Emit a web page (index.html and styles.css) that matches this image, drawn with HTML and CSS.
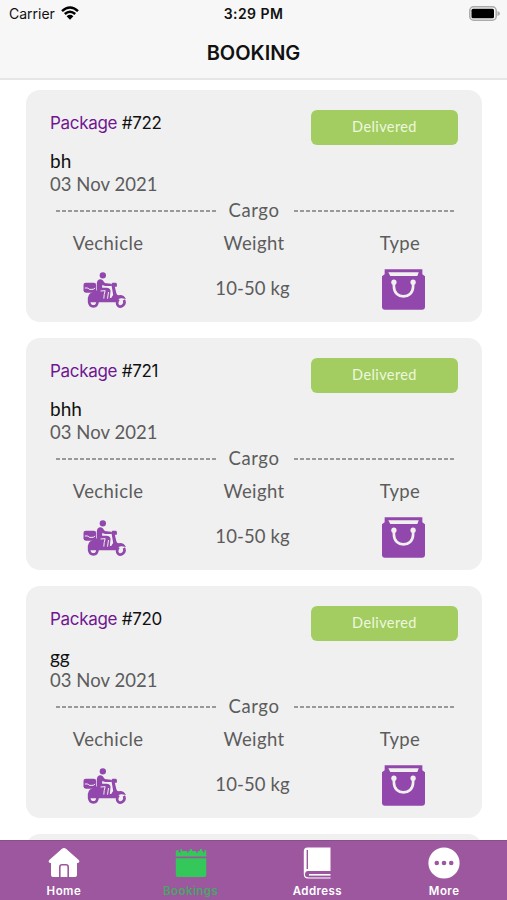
FILE: index.html
```
<!DOCTYPE html>
<html lang="en">
<head>
    <meta charset="UTF-8">
    <meta name="viewport" content="width=device-width, initial-scale=1.0">
    <title>Booking</title>
    <link rel="stylesheet" href="styles.css">
</head>
<body>
    <!-- Shared icons -->
    <svg class="icon-defs" width="0" height="0">
        <symbol id="scooter" viewBox="0 0 128 108">
            <circle cx="59" cy="10" r="9.5"/>
            <rect x="1" y="32" width="38" height="30" rx="7"/>
            <path class="box-line" d="M5 48H14L18 52H30L36 48"/>
            <path d="M43 26Q50 19 58 24L65 33L83 35Q88 38 84 42H66L57 39V47H70Q82 48 82 57L80 78H84L90 69L86 45Q83 34 88 32H99Q103 35 101 44H95L100 65Q103 71 111 69Q123 69 128 81L116 79Q105 78 101 91H14Q10 65 30 60L41 55V33Z"/>
            <path class="leg-line" d="M52 57L66 56Q62 68 62 80M76 60L73 80"/>
            <path class="wheel" d="M18 90Q19 103 31 103Q42 103 43 90M106 82Q98 95 105 101Q112 107 120 100Q127 93 122 84"/>
        </symbol>
        <symbol id="bag" viewBox="0 0 130 122">
            <path d="M8 0H122V15L130 21V113Q130 122 121 122H9Q0 122 0 113V21L8 15Z"/>
            <path class="cut" d="M19 9H111L107 20H25Z"/>
            <circle class="cut" cx="36" cy="39" r="8"/>
            <circle class="cut" cx="94" cy="39" r="8"/>
            <path class="handle" d="M36 39V52C36 92 94 92 94 52V39"/>
        </symbol>
    </svg>

    <header class="header">
        <div class="status-bar">
            <div class="carrier">Carrier
                <svg class="wifi" viewBox="0 0 18 14">
                    <path d="M1 5.1Q9-2 17 5.1M3.8 8Q9 3.4 14.2 8"/>
                    <path class="wifi-dot" d="M5.6 10.3Q9 7.4 12.4 10.3L9 13.8Z"/>
                </svg>
            </div>
            <div class="time">3:29 PM</div>
            <svg class="battery" viewBox="0 0 31 15">
                <rect class="battery-case" x=".8" y=".8" width="26.4" height="13.4" rx="3.8"/>
                <rect x="2.5" y="2.8" width="22.5" height="9.4" rx="1.5"/>
                <path class="battery-cap" d="M28.5 5Q31 6 31 7.5Q31 9 28.5 10Z"/>
            </svg>
        </div>
        <h1 class="title">BOOKING</h1>
    </header>

    <main class="booking-list">
        <section class="card">
            <div class="card-top">
                <div class="package"><span>Package</span> #722</div>
                <div class="badge">Delivered</div>
            </div>
            <div class="name">bh</div>
            <div class="date">03 Nov 2021</div>
            <div class="divider">
                <i class="dashes"></i><span class="cargo">Cargo</span><i class="dashes"></i>
            </div>
            <div class="details">
                <div class="label">Vechicle</div>
                <div class="label">Weight</div>
                <div class="label">Type</div>
                <div class="value"><svg class="scooter"><use href="#scooter"/></svg></div>
                <div class="value kg">10-50 kg</div>
                <div class="value"><svg class="bag"><use href="#bag"/></svg></div>
            </div>
        </section>

        <section class="card">
            <div class="card-top">
                <div class="package"><span>Package</span> #721</div>
                <div class="badge">Delivered</div>
            </div>
            <div class="name">bhh</div>
            <div class="date">03 Nov 2021</div>
            <div class="divider">
                <i class="dashes"></i><span class="cargo">Cargo</span><i class="dashes"></i>
            </div>
            <div class="details">
                <div class="label">Vechicle</div>
                <div class="label">Weight</div>
                <div class="label">Type</div>
                <div class="value"><svg class="scooter"><use href="#scooter"/></svg></div>
                <div class="value kg">10-50 kg</div>
                <div class="value"><svg class="bag"><use href="#bag"/></svg></div>
            </div>
        </section>

        <section class="card">
            <div class="card-top">
                <div class="package"><span>Package</span> #720</div>
                <div class="badge">Delivered</div>
            </div>
            <div class="name">gg</div>
            <div class="date">03 Nov 2021</div>
            <div class="divider">
                <i class="dashes"></i><span class="cargo">Cargo</span><i class="dashes"></i>
            </div>
            <div class="details">
                <div class="label">Vechicle</div>
                <div class="label">Weight</div>
                <div class="label">Type</div>
                <div class="value"><svg class="scooter"><use href="#scooter"/></svg></div>
                <div class="value kg">10-50 kg</div>
                <div class="value"><svg class="bag"><use href="#bag"/></svg></div>
            </div>
        </section>

        <section class="card"></section>
    </main>

    <nav class="tab-bar">
        <a class="tab">
            <svg class="tab-icon" viewBox="0 0 32 32">
                <path d="M14 1.8Q16 .4 18 1.8L31 13.3Q32 15.5 30 16H29V28Q29 30 27 30H5Q3 30 3 28V16H2Q0 15.5 1 13.3Z"/>
                <path class="door" d="M11.8 30V20Q11.8 17.8 14 17.8H18Q20.2 17.8 20.2 20V30"/>
            </svg>
            <span>Home</span>
        </a>
        <a class="tab active">
            <svg class="tab-icon" viewBox="0 0 32 32">
                <path d="M.8 9.5V4L3.5 2.5V5.5H5.5V2H7V4H12V5.5H13.5V4H15V2H17V4H21V5.5H23V4H25V2H27V4H28V5.5H29.5V2.5L31.3 4V9.5ZM.8 11.3H31.3V28Q31.3 30 29.5 30H2.5Q.8 30 .8 28Z"/>
            </svg>
            <span>Bookings</span>
        </a>
        <a class="tab">
            <svg class="tab-icon" viewBox="0 0 32 32">
                <path d="M6.5.5H29.5V24H7Q4 24 4 27.5Q4 30.3 7 30.3H29.5V31.5H7Q2.8 31.5 2.8 27V4.5Q2.8.5 6.5.5Z"/>
                <path class="book-line" d="M6.3 3V22"/>
                <path class="pages" d="M29.5 25.5H7.5Q5 25.5 5 27.7Q5 29.8 7.5 29.8H29.5"/>
                <path d="M8 27H29.5V28.6H8Z"/>
            </svg>
            <span>Address</span>
        </a>
        <a class="tab">
            <svg class="tab-icon" viewBox="0 0 32 32">
                <circle cx="16" cy="16" r="15.6"/>
                <circle class="dot" cx="8.8" cy="16" r="2.3"/>
                <circle class="dot" cx="16" cy="16" r="2.3"/>
                <circle class="dot" cx="23.2" cy="16" r="2.3"/>
            </svg>
            <span>More</span>
        </a>
    </nav>
</body>
</html>
```
FILE: styles.css
```
* {
    box-sizing: border-box;
}
body {
    margin: 0;
    height: 900px;
    display: flex;
    flex-direction: column;
    overflow: hidden;
    background-color: #fff;
    font-family: Lato, sans-serif;
}
.icon-defs {
    position: absolute;
}
.header {
    flex: none;
    height: 80px;
    background-color: #f7f7f7;
    border-bottom: 2px solid #e6e6e6;
    font-family: Inter, sans-serif;
    color: #111;
}
.status-bar {
    display: grid;
    grid-template-columns: 1fr auto 1fr;
    align-items: center;
    height: 27px;
    padding: 0 7px 0 9px;
    font-size: 14px;
}
.carrier {
    display: flex;
    align-items: center;
    gap: 6px;
}
.wifi {
    width: 18px;
    height: 14px;
    margin-top: -2px;
    fill: none;
    stroke: #000;
    stroke-width: 2.5;
}
.wifi-dot {
    fill: #000;
    stroke: none;
}
.time {
    margin-left: -2px;
    font-weight: 600;
    letter-spacing: 0.45px;
}
.battery {
    width: 31px;
    height: 15px;
    margin-top: -1px;
    justify-self: end;
}
.battery-case {
    fill: #f7f7f7;
    stroke: #aaa;
    stroke-width: 1.5;
}
.battery-cap {
    fill: #aaa;
}
.title {
    margin: 0;
    text-align: center;
    font-size: 20px;
    font-weight: 600;
    line-height: 52px;
}

/* Booking cards */
.booking-list {
    flex: 1;
    min-height: 0;
    overflow: hidden;
    padding: 10px 25px 0 26px;
}
.card {
    height: 232px;
    margin-bottom: 16px;
    padding: 20px 24px 0;
    border-radius: 14px;
    background-color: #f0f0f0;
    color: #5c5c5c;
    font-size: 18.5px;
}
.card-top {
    display: flex;
    justify-content: space-between;
    height: 35px;
}
.package {
    font-family: Inter, sans-serif;
    font-size: 17px;
    line-height: 26px;
    letter-spacing: -0.3px;
    color: #111;
}
.package span {
    color: #6f1692;
}
.badge {
    width: 147px;
    height: 35px;
    border-radius: 6px;
    background-color: #a3cd61;
    color: #eef8df;
    font-size: 14.5px;
    line-height: 33px;
    letter-spacing: 0.4px;
    text-align: center;
}
.name {
    margin-top: 4px;
    line-height: 23px;
    font-size: 19px;
    color: #111;
}
.date {
    line-height: 24px;
    letter-spacing: 0.05px;
}
.divider {
    display: flex;
    justify-content: space-between;
    align-items: center;
    height: 28px;
    padding: 0 3px 0 6px;
}
.dashes {
    width: 161px;
    height: 2px;
    margin-top: 2px;
    background: repeating-linear-gradient(90deg, #999 0 4px, transparent 4px 6px);
}
.cargo {
    margin-left: -3px;
    letter-spacing: 0.6px;
}
.details {
    display: grid;
    grid-template-columns: repeat(3, 146px);
    grid-template-rows: 37px 54px;
    justify-content: center;
    text-align: center;
}
.label {
    line-height: 38px;
    letter-spacing: 0.4px;
}
.value {
    display: flex;
    justify-content: center;
    align-items: center;
}
.kg {
    margin-left: -3px;
    letter-spacing: 0.1px;
}
.scooter {
    width: 43px;
    height: 36px;
    margin: 3px 0 0 -7px;
    fill: #9147ab;
}
.box-line,
.leg-line {
    fill: none;
    stroke: #f0f0f0;
    stroke-width: 3;
}
.wheel {
    fill: none;
    stroke: #9147ab;
    stroke-width: 8;
}
.bag {
    width: 43px;
    height: 41px;
    margin: 2px 0 0 6px;
    fill: #9147ab;
}
.cut {
    fill: #f0f0f0;
}
.handle {
    fill: none;
    stroke: #f0f0f0;
    stroke-width: 8;
}

/* Bottom tabs */
.tab-bar {
    flex: none;
    display: flex;
    height: 60px;
    background-color: #9c579f;
    border-top: 1px solid #875089;
}
.tab {
    flex: 1;
    display: flex;
    flex-direction: column;
    align-items: center;
    padding: 6px 0 0 1px;
    color: #fff;
    font-family: Inter, sans-serif;
    font-size: 11.5px;
    font-weight: 600;
    line-height: 15px;
    letter-spacing: 0.45px;
}
.tab-icon {
    width: 32px;
    height: 32px;
    margin-bottom: 5px;
    fill: currentColor;
}
.active {
    color: #34c759;
}
.active span {
    color: #4ba566;
}
.door {
    fill: none;
    stroke: #9c579f;
    stroke-width: 1.6;
}
.book-line {
    stroke: #9c579f;
    stroke-width: 1.4;
}
.pages {
    fill: none;
    stroke: #9c579f;
    stroke-width: 1;
}
.dot {
    fill: #9c579f;
}
```
